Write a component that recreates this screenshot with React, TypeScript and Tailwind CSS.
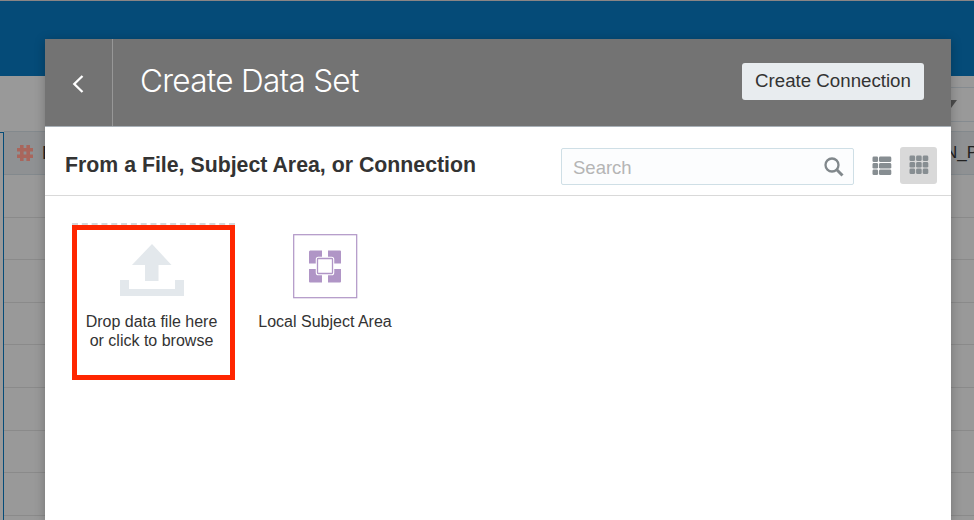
import React from "react";

const rows = [0, 1, 2, 3, 4, 5, 6, 7, 8];

function Backdrop() {
  return (
    <div className="flex h-full w-full flex-col bg-[#999999]">
      <div className="h-[76px] shrink-0 border-t border-[#8a8585] bg-[#054b78]" />
      <div className="flex h-[55px] shrink-0 flex-col items-end justify-center pt-[1px]">
        <div className="flex h-[35px] w-[60px] items-center justify-end border-y border-[#858b90] pr-[17px]">
          <svg width="12" height="8" viewBox="0 0 12 8">
            <path d="M0 0H12L6 8Z" fill="#4d4d4d" />
          </svg>
        </div>
      </div>
      <div className="flex min-h-0 grow">
        <div className="mt-[1px] w-[4px] shrink-0 border-r border-t border-[#054b78]" />
        <div className="flex min-w-0 grow flex-col">
          <div className="flex h-[44px] shrink-0 items-center justify-between border-y border-[#83898d] bg-[#8f9193] pl-[13px]">
            <div className="flex items-center">
              <svg width="16" height="16" viewBox="0 0 16 16" fill="none" stroke="#a9665c" strokeWidth="3.6">
                <path d="M4.800 0V16M11.200 0V16M0 4.800H16M0 11.200H16" />
              </svg>
              <span className="ml-[9px] text-[18px] text-[#222]">E</span>
            </div>
            <span className="w-[29px] whitespace-nowrap text-[17px] text-[#222]">N_P</span>
          </div>
          {rows.map((r) => (
            <div key={r} className="h-[42.6px] shrink-0 border-b border-[#8a8a8a]" />
          ))}
        </div>
      </div>
    </div>
  );
}

function ListIcon() {
  return (
    <svg width="20" height="20" viewBox="0 0 20 20" fill="#878e92">
      {[0.5, 7, 13.5].map((y) => (
        <g key={y}>
          <rect x="0.5" y={y} width="5.6" height="5.6" rx="1.4" />
          <rect x="7" y={y} width="12.3" height="5.6" rx="1.4" />
        </g>
      ))}
    </svg>
  );
}

function GridIcon() {
  return (
    <svg width="20" height="20" viewBox="0 0 20 20" fill="#878e92">
      {[0.5, 7, 13.5].map((y) =>
        [0.5, 7.1, 13.7].map((x) => <rect key={`${x}-${y}`} x={x} y={y} width="5.6" height="5.6" rx="1.4" />)
      )}
    </svg>
  );
}

export default function App() {
  return (
    <div className="relative h-[520px] w-[974px] overflow-hidden font-['Liberation_Sans',Arial,sans-serif]">
      <Backdrop />
      <div className="absolute left-[45px] top-[39px] flex h-[481px] w-[906px] flex-col bg-white shadow-[0_2px_10px_rgba(0,0,0,0.25)]">
        <header className="flex h-[88px] shrink-0 items-center border-b border-[#a9b1b8] bg-[#737373]">
          <button className="flex h-full w-[68px] items-center justify-center border-r border-[#979797] pr-[2px] pt-[2px]">
            <svg width="12" height="20" viewBox="0 0 12 20" fill="none" stroke="#fff" strokeWidth="2.3">
              <path d="M10.500 2L2.300 10L10.500 18" />
            </svg>
          </button>
          <h1 className="ml-[27px] grow whitespace-nowrap pb-[3px] font-['Inter',sans-serif] text-[31.5px] font-light tracking-[-0.7px] text-white">
            Create Data Set
          </h1>
          <button className="mb-[2px] mr-[27px] h-[37px] w-[182px] whitespace-nowrap rounded-[3px] bg-[#e8ecef] text-[18.7px] text-[#333]">
            Create Connection
          </button>
        </header>
        <div className="flex h-[69px] shrink-0 items-center border-b border-[#d9d9d9] pl-[20px] pr-[14px]">
          <h2 className="grow whitespace-nowrap pt-[9px] text-[21.3px] font-bold text-[#333]">
            From a File, Subject Area, or Connection
          </h2>
          <div className="mt-[21px] flex h-[37px] w-[293px] items-center justify-between self-start rounded-[2px] border border-[#cfdfe6] bg-[#fcfdfe] pl-[11px] pr-[9px]">
            <span className="pt-[3px] text-[18.5px] text-[#b5b5b5]">Search</span>
            <svg width="20" height="20" viewBox="0 0 20 20" fill="none" stroke="#81888c">
              <circle cx="8" cy="8" r="6.500" strokeWidth="2.3" />
              <path d="M12.800 12.800L18.500 18.500" strokeWidth="3" />
            </svg>
          </div>
          <div className="ml-[18px] mt-[9px]">
            <ListIcon />
          </div>
          <div className="ml-[8px] mt-[8px] flex h-[37px] w-[37px] items-center justify-center rounded-[3px] bg-[#d9d9d9]">
            <GridIcon />
          </div>
        </div>
        <main className="flex items-start pl-[27px] pt-[27px] text-[16px] leading-[19px] text-[#333]">
          <div className="flex h-[157px] w-[163px] flex-col items-center border-t-2 border-dashed border-[#d4d8db]">
            <div className="flex h-[155px] w-[163px] flex-col items-center border-[5px] border-[#ff2600] pr-[4px] pt-[14px]">
              <svg width="64" height="52" viewBox="0 0 64 52" fill="#e3e8ec">
                <path d="M32 0L51.500 21H38.500V37H25V21H12Z" />
                <path d="M0 36H9V45H55V36H64V52H0Z" />
              </svg>
              <div className="mt-[16px] whitespace-nowrap text-center">
                Drop data file here
                <br />
                or click to browse
              </div>
            </div>
          </div>
          <div className="ml-[21px] mt-[11px] flex w-[138px] flex-col items-center">
            <svg width="65" height="65" viewBox="0 0 65 65" fill="#b095c6">
              <rect x="0.700" y="0.700" width="63" height="63" fill="none" stroke="#b095c6" strokeWidth="1.2" />
              <path d="M17 16.500H29V24H24V29.500H16V17.500ZM35 16.500H47Q48 16.500 48 17.500V29.500H40V24H35ZM16 35H24V40.500H29V48.500H17Q16 48.500 16 47.500ZM40 35H48V47.500Q48 48.500 47 48.500H35V40.500H40Z" />
              <rect x="24.500" y="24.500" width="15" height="15" rx="0.8" fill="#fff" stroke="#fff" strokeWidth="3.5" />
              <rect x="24.500" y="24.500" width="15" height="15" rx="0.8" fill="#fff" stroke="#b095c6" strokeWidth="1.3" />
            </svg>
            <div className="mt-[13px] whitespace-nowrap">Local Subject Area</div>
          </div>
        </main>
      </div>
    </div>
  );
}
